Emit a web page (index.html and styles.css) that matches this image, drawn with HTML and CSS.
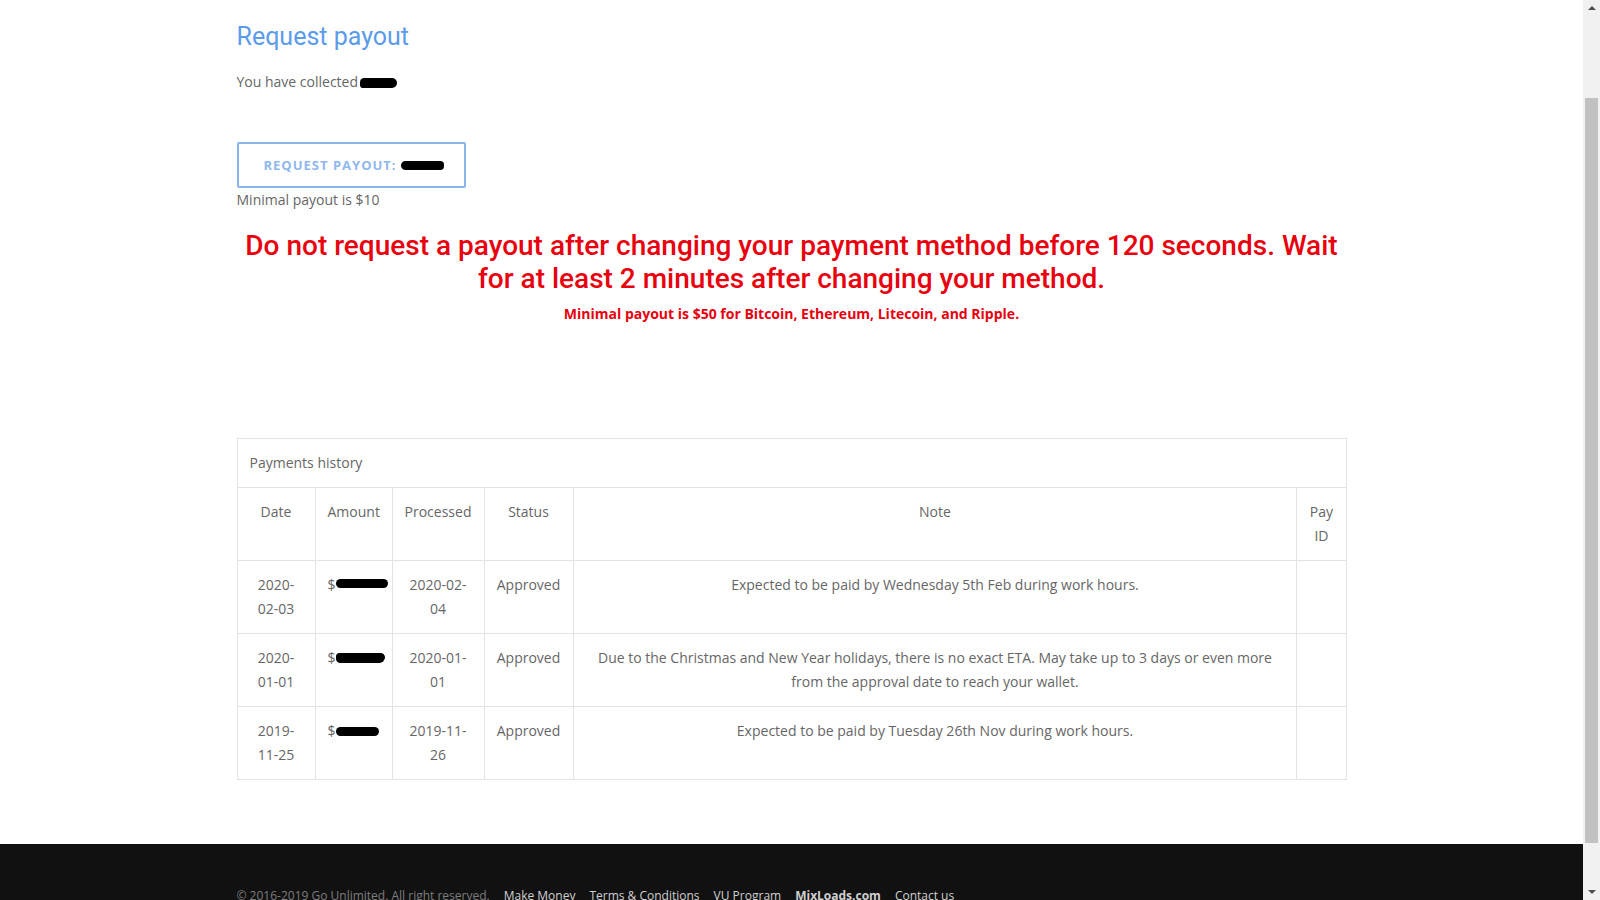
FILE: index.html
```html
<!DOCTYPE html>
<html lang="en">
<head>
  <meta charset="UTF-8" />
  <meta name="viewport" content="width=device-width, initial-scale=1.0"/>
  <title>Request payout</title>
  <link rel="stylesheet" href="styles.css">
</head>
<body>
  <div class="page">
    <!-- Payout request -->
    <main class="container">
      <h1 class="page-title">Request payout</h1>
      <p class="collected">You have collected <span class="blot blot-sm"></span></p>

      <button class="payout-btn">REQUEST PAYOUT: <span class="blot blot-btn"></span></button>
      <p class="min-payout">Minimal payout is $10</p>

      <h3 class="warning">Do not request a payout after changing your payment method before 120 seconds. Wait for at least 2 minutes after changing your method.</h3>
      <p class="warning-small">Minimal payout is $50 for Bitcoin, Ethereum, Litecoin, and Ripple.</p>

      <!-- Payments history -->
      <table class="history">
        <colgroup>
          <col style="width: 78px">
          <col style="width: 77px">
          <col style="width: 92px">
          <col style="width: 89px">
          <col>
          <col style="width: 49px">
        </colgroup>
        <thead>
          <tr><th colspan="6" class="caption">Payments history</th></tr>
          <tr>
            <th>Date</th>
            <th>Amount</th>
            <th>Processed</th>
            <th>Status</th>
            <th>Note</th>
            <th>Pay ID</th>
          </tr>
        </thead>
        <tbody>
          <tr>
            <td>2020-02-03</td>
            <td class="amount">$<span class="blot blot-row1"></span></td>
            <td>2020-02-04</td>
            <td>Approved</td>
            <td>Expected to be paid by Wednesday 5th Feb during work hours.</td>
            <td></td>
          </tr>
          <tr>
            <td>2020-01-01</td>
            <td class="amount">$<span class="blot blot-row2"></span></td>
            <td>2020-01-01</td>
            <td>Approved</td>
            <td>Due to the Christmas and New Year holidays, there is no exact ETA. May take up to 3 days or even more from the approval date to reach your wallet.</td>
            <td></td>
          </tr>
          <tr>
            <td>2019-11-25</td>
            <td class="amount">$<span class="blot blot-row3"></span></td>
            <td>2019-11-26</td>
            <td>Approved</td>
            <td>Expected to be paid by Tuesday 26th Nov during work hours.</td>
            <td></td>
          </tr>
        </tbody>
      </table>
    </main>

    <!-- Footer -->
    <footer class="footer">
      <div class="footer-inner">
        <span class="copy">&copy; 2016-2019 Go Unlimited. All right reserved.</span>
        <a href="#">Make Money</a>
        <a href="#">Terms &amp; Conditions</a>
        <a href="#">VU Program</a>
        <a href="#" class="strong">MixLoads.com</a>
        <a href="#">Contact us</a>
      </div>
    </footer>
  </div>

  <!-- window scrollbar -->
  <div class="scrollbar">
    <span class="arrow up"></span>
    <div class="thumb-track"><div class="thumb"></div></div>
    <span class="arrow down"></span>
  </div>
</body>
</html>
```

FILE: styles.css
```css
/* base */
* {
  box-sizing: border-box;
}

html, body {
  margin: 0;
  height: 100%;
}

body {
  display: flex;
  overflow: hidden;
  font-family: 'Open Sans', sans-serif;
  font-size: 14px;
  line-height: 24px;
  color: #666;
  background: #fff;
}

.page {
  flex: 1;
  display: flex;
  flex-direction: column;
  min-width: 0;
}

.container {
  width: 1110px;
  margin: 0 auto;
  padding-top: 22px;
}

/* heading + collected */
.page-title {
  margin: 0 0 18px;
  font-family: Roboto, sans-serif;
  font-weight: 400;
  font-size: 25px;
  line-height: 30px;
  color: #5b9bea;
}

.collected {
  margin: 0 0 48px;
}

.blot {
  display: inline-block;
  background: #000;
  border-radius: 6px;
  vertical-align: middle;
}
.blot-sm {
  width: 37px;
  height: 10px;
  margin-left: -2px;
  border-radius: 5px 6px 6px 4px;
}

/* payout button */
.payout-btn {
  display: block;
  width: 229px;
  height: 46px;
  padding: 0 0 0 25px;
  text-align: left;
  background: #fff;
  border: 2px solid #8ab4ec;
  border-radius: 2px;
  font-family: 'Open Sans', sans-serif;
  font-weight: 700;
  font-size: 13px;
  letter-spacing: 1px;
  color: #8fb8ee;
  cursor: pointer;
}
.blot-btn {
  width: 43px;
  height: 9px;
  margin-left: 0;
  margin-top: -2px;
  border-radius: 6px 5px 5px 6px;
}

.min-payout {
  margin: 0 0 17px;
}

/* warnings */
.warning {
  margin: 0 0 7px;
  text-align: center;
  font-family: Roboto, sans-serif;
  font-weight: 500;
  font-size: 28px;
  line-height: 33px;
  color: #e8000e;
}

.warning-small {
  margin: 0 0 112px;
  text-align: center;
  font-weight: 700;
  color: #e8000e;
}

/* payments table */
.history {
  width: 100%;
  table-layout: fixed;
  border-collapse: collapse;
  border: 1px solid #dedede;
}

.history th,
.history td {
  padding: 12px;
  border: 1px solid #e3e3e3;
  font-weight: 400;
  text-align: center;
  vertical-align: top;
}

.history th.caption {
  text-align: left;
}

.history td.amount {
  text-align: left;
  white-space: nowrap;
}

.blot-row1 {
  width: 52px;
  height: 9px;
  margin-top: -5px;
  border-radius: 5px;
}
.blot-row2 {
  width: 49px;
  height: 10px;
  margin-top: -3px;
  border-radius: 5px 6px 8px 6px;
}
.blot-row3 {
  width: 43px;
  height: 9px;
  margin-top: -2px;
  border-radius: 5px;
}

/* footer */
.footer {
  margin-top: 64px;
  flex: 1;
  background: #111;
  padding-top: 42px;
}

.footer-inner {
  width: 1110px;
  margin: 0 auto;
  display: flex;
  gap: 14px;
  font-size: 12px;
  line-height: 20px;
}

.footer .copy {
  color: #7d7d7d;
}

.footer a {
  color: #d0d0d0;
  text-decoration: none;
}
.footer a.strong {
  font-weight: 700;
}

/* scrollbar strip */
.scrollbar {
  width: 17px;
  flex: none;
  display: flex;
  flex-direction: column;
  align-items: center;
  background: #f1f1f1;
}

.thumb-track {
  flex: 1;
  width: 100%;
  padding: 82px 2px 41px;
}

.thumb {
  height: 100%;
  background: #c1c1c1;
}

.arrow {
  width: 0;
  height: 0;
  border-left: 4px solid transparent;
  border-right: 4px solid transparent;
  margin: 6px 0;
}
.arrow.up {
  border-bottom: 4px solid #505050;
}
.arrow.down {
  border-top: 4px solid #505050;
}
```
